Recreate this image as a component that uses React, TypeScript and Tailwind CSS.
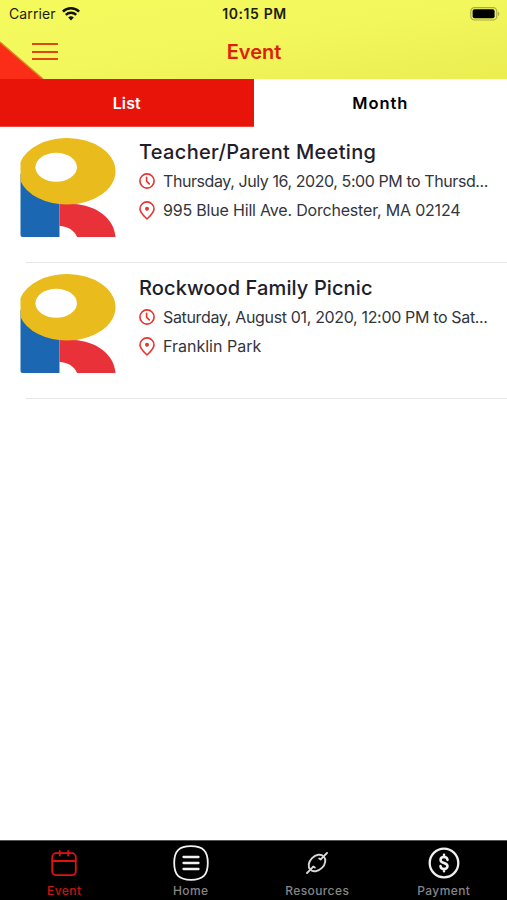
import React from 'react';

interface EventItem {
  title: string;
  titleClass: string;
  time: string;
  timeClass: string;
  place: string;
  placeClass: string;
}

const events: EventItem[] = [
  {
    title: 'Teacher/Parent Meeting',
    titleClass: 'tracking-[0.33px]',
    time: 'Thursday, July 16, 2020, 5:00 PM to Thursd...',
    timeClass: 'tracking-[-0.42px]',
    place: '995 Blue Hill Ave. Dorchester, MA 02124',
    placeClass: 'tracking-[-0.19px]',
  },
  {
    title: 'Rockwood Family Picnic',
    titleClass: 'tracking-[0.11px]',
    time: 'Saturday, August 01, 2020, 12:00 PM to Sat...',
    timeClass: 'tracking-[-0.34px]',
    place: 'Franklin Park',
    placeClass: 'tracking-[0px]',
  },
];

function WifiIcon() {
  return (
    <svg width="18" height="14" viewBox="0 0 18 14" fill="none" stroke="#111" strokeWidth="2.5">
      <path d="M0.9 4.6a11.6 11.6 0 0 1 16.2 0" />
      <path d="M3.8 7.9a7.4 7.4 0 0 1 10.4 0" />
      <path d="M9 13.4l-2.8-2.9a4 4 0 0 1 5.6 0z" fill="#111" stroke="none" />
    </svg>
  );
}

function BatteryIcon() {
  return (
    <svg width="30" height="14" viewBox="0 0 30 14">
      <rect x="0.8" y="0.6" width="26" height="12.4" rx="3.8" fill="none" stroke="#a9ab45" strokeWidth="1.2" />
      <rect x="2.6" y="2.3" width="22" height="9" rx="2" fill="#000" />
      <path d="M28 4.8v4.2a2.3 2.3 0 0 0 0-4.2z" fill="#a9ab45" />
    </svg>
  );
}

function Logo() {
  return (
    <svg className="shrink-0" width="96" height="99" viewBox="0 0 96 99">
      <path d="M0.5 36h39v63H2.5a2 2 0 0 1-2-2z" fill="#1b67b1" />
      <path d="M39.5 66h14c22 1 41 14 42 33H57c-2-6-9-11-17.5-11z" fill="#e93139" />
      <path
        d="M0.5 23.9A48.5 33.2 0 0 1 47 0A48.5 33.2 0 0 1 95.5 33.2A48.5 33.2 0 0 1 47 66.5A48.5 33.2 0 0 1 0.5 43z"
        fill="#e9bb1c"
      />
      <ellipse cx="36.2" cy="29.3" rx="20.8" ry="14.5" fill="#fff" />
    </svg>
  );
}

function ClockIcon() {
  return (
    <svg width="16" height="16" viewBox="0 0 16 16" fill="none" stroke="#e5352f" strokeWidth="1.6">
      <circle cx="8" cy="8" r="7.1" />
      <path d="M7.6 4.2v4.1l2.7 2.6" strokeLinecap="round" strokeLinejoin="round" />
    </svg>
  );
}

function PinIcon() {
  return (
    <svg width="16" height="19" viewBox="0 0 16 19" fill="none" stroke="#e5352f" strokeWidth="1.6">
      <path d="M8 18C5 15 1 11.5 1 7.9a7 7 0 0 1 14 0C15 11.5 11 15 8 18z" strokeLinejoin="round" />
      <circle cx="8" cy="7.8" r="2" fill="#e5352f" stroke="none" />
    </svg>
  );
}

function CalendarIcon() {
  return (
    <svg width="26" height="26" viewBox="0 0 26 26" fill="none" stroke="#dc140d" strokeWidth="1.8" strokeLinecap="round">
      <rect x="1.2" y="3.2" width="23.6" height="22" rx="4" />
      <path d="M1.5 11h23M8.7 1v4.5M17.2 1v4.5" />
    </svg>
  );
}

function HomeIcon() {
  return (
    <svg width="36" height="36" viewBox="0 0 36 36" fill="none" stroke="#f2f2f2">
      <path
        d="M18 1.2C30 1.2 34.8 6 34.8 18S30 34.8 18 34.8 1.2 30 1.2 18 6 1.2 18 1.2z"
        strokeWidth="1.8"
      />
      <path d="M10.5 12h15M10.5 18h15M10.5 24h15" strokeWidth="2.3" strokeLinecap="round" />
    </svg>
  );
}

function PlugIcon() {
  return (
    <svg width="22" height="22" viewBox="0 0 22 22" fill="none" stroke="#d6d6d6" strokeWidth="1.9" strokeLinecap="round">
      <ellipse cx="11" cy="11" rx="9.4" ry="7" transform="rotate(-45 11 11)" />
      <path d="M1 21l6.3-6.3M14.7 7.3L21 1" />
      <path d="M7.3 14.7l1.5.8M14.7 7.3l-1.5-.8" />
    </svg>
  );
}

function DollarIcon() {
  return (
    <svg width="32" height="32" viewBox="0 0 32 32" fill="none" stroke="#f0f0f0">
      <circle cx="16" cy="16" r="14.3" strokeWidth="2.3" />
      <path
        d="M19.5 12.9c-.2-1.800-1.600-2.800-3.500-2.800s-3.500 1-3.500 2.800c0 4 7 2.200 7 6.200 0 1.900-1.600 2.900-3.500 2.900s-3.400-1.100-3.500-2.900M16 7.800v2.200M16 22v2.300"
        strokeWidth="2.5"
        strokeLinecap="round"
      />
    </svg>
  );
}

const tabs = [
  { label: 'Event', icon: <CalendarIcon />, color: 'text-[#c9150f]' },
  { label: 'Home', icon: <HomeIcon />, color: 'text-[#858585]' },
  { label: 'Resources', icon: <PlugIcon />, color: 'text-[#858585]' },
  { label: 'Payment', icon: <DollarIcon />, color: 'text-[#858585]' },
];

function EventRow({ event }: { event: EventItem }) {
  return (
    <li className="h-[136px] pl-5">
      <div className="flex h-[123px] pt-[11px]">
        <Logo />
        <div className="ml-[23px] pt-[0.5px] whitespace-nowrap text-[#32353d]">
          <h2 className={`h-[28px] text-[20px] leading-[27px] font-medium text-[#1d202b] ${event.titleClass}`}>
            {event.title}
          </h2>
          <div className="flex h-[29px] items-center gap-2">
            <ClockIcon />
            <span className={`text-[16px] ${event.timeClass}`}>{event.time}</span>
          </div>
          <div className="flex h-[29px] items-center gap-2">
            <PinIcon />
            <span className={`text-[16px] ${event.placeClass}`}>{event.place}</span>
          </div>
        </div>
      </div>
      <div className="ml-[6px] mt-[12px] border-b border-[#e6e6e6]" />
    </li>
  );
}

export default function App() {
  return (
    <div className="flex h-[900px] w-[507px] flex-col overflow-hidden bg-white font-[Inter,sans-serif]">
      {/* Status bar and title */}
      <header className="relative h-[79px] bg-linear-to-br from-[#f5fa5c] via-[#f2f75c] to-[#ebed50]">
        <svg className="absolute bottom-0 left-0" width="44" height="38" viewBox="0 0 44 38">
          <path d="M0 1L43 38H0z" fill="#fb2c18" />
          <path d="M0 1L43 38" stroke="#d98b22" strokeWidth="1.5" />
        </svg>
        <div className="grid h-[27px] grid-cols-3 items-center pl-[9px] pr-[7px] text-[#1c1d10]">
          <div className="flex items-center gap-[6px]">
            <span className="text-[14px] tracking-[0.1px]">Carrier</span>
            <WifiIcon />
          </div>
          <span className="text-center text-[14px] font-semibold tracking-[0.6px]">10:15 PM</span>
          <div className="flex justify-end">
            <BatteryIcon />
          </div>
        </div>
        <div className="relative flex h-[50px] items-center justify-center">
          <button className="absolute left-8 top-[16px] flex w-[26px] flex-col gap-[5.5px]">
            <span className="h-[2px] bg-[#dc4a12]" />
            <span className="h-[2px] bg-[#dc4a12]" />
            <span className="h-[2px] bg-[#dc4a12]" />
          </button>
          <h1 className="pl-px text-[20px] font-semibold text-[#dd1f0a]">Event</h1>
        </div>
      </header>

      {/* View switch */}
      <div className="grid h-[48px] grid-cols-2 text-[16px] font-semibold">
        <button className="border-b border-[#f0443c] bg-[#e81309] tracking-[0.1px] text-white">List</button>
        <button className="bg-white pt-px text-[16.5px] tracking-[0.9px] text-black">Month</button>
      </div>

      <ul className="flex-1">
        {events.map((event) => (
          <EventRow key={event.title} event={event} />
        ))}
      </ul>

      {/* Bottom tabs */}
      <nav className="grid h-[60px] grid-cols-4 border-t border-[#555] bg-black pl-px">
        {tabs.map((tab) => (
          <div key={tab.label} className={`flex flex-col items-center ${tab.color}`}>
            <div className="flex h-[44px] items-center justify-center">{tab.icon}</div>
            <span className="text-[12px] leading-[12px] font-medium tracking-[0.4px]">{tab.label}</span>
          </div>
        ))}
      </nav>
    </div>
  );
}
